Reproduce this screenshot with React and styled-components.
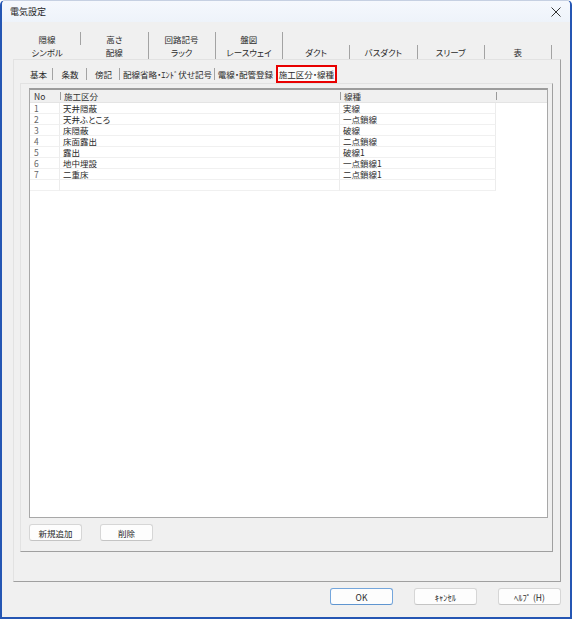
import React from "react";
import styled, { createGlobalStyle } from "styled-components";

const Global = createGlobalStyle`
  html, body { margin: 0; padding: 0; background: #ffffff; }
  body {
    font-family: "Noto Sans CJK JP", "Noto Sans", sans-serif;
    font-feature-settings: "palt";
    -webkit-font-smoothing: antialiased;
  }
  #root { width: 573px; height: 620px; }
  *, *::before, *::after { box-sizing: border-box; }
`;

const Window = styled.div`
  width: 572px;
  height: 619px;
  display: flex;
  flex-direction: column;
  background: #f0f0f0;
  border: 2px solid #2556b3;
  border-top: 1px solid #c6d0e2;
  border-radius: 5px 5px 0 0;
  overflow: hidden;
`;

const TitleBar = styled.div`
  height: 21px;
  flex: none;
  display: flex;
  align-items: center;
  padding: 0 9px 0 8px;
  background: linear-gradient(#f5f8fd, #eef3fa);
  font-size: 9px;
  color: #1e1e1e;
`;

const Close = styled.span`
  margin-left: auto;
  display: flex;
  align-items: center;
`;

const Body = styled.div`
  flex: 1;
  display: flex;
  flex-direction: column;
  padding: 10px 9px 0 11px;
  min-height: 0;
`;

const TabStrip = styled.div`
  flex: none;
  display: grid;
  grid-template-columns: repeat(8, 67.25px);
  grid-template-rows: 13px 14px;
  padding-left: 1px;
`;

const Tab = styled.div`
  display: flex;
  align-items: center;
  justify-content: center;
  font-size: 8.5px;
  color: #2a2a2a;
  border-right: 1px solid ${(p) => (p.$sep ? "#a3a3a3" : "transparent")};
  grid-row: ${(p) => p.$row};
`;

const Panel = styled.div`
  flex: 1;
  display: flex;
  flex-direction: column;
  min-height: 0;
  border: 1px solid #a0a0a0;
  border-top-color: #e2e2e2;
  border-left-color: #e2e2e2;
  padding: 5px 7px 29px 6px;
`;

const SubTabs = styled.div`
  flex: none;
  display: flex;
  height: 18px;
  padding-left: 4px;
`;

const SubTab = styled.div`
  position: relative;
  width: ${(p) => p.$w}px;
  display: flex;
  align-items: center;
  justify-content: center;
  font-size: 8.5px;
  color: #2a2a2a;
  white-space: nowrap;
  background: ${(p) => (p.$selected ? "#fbfbfb" : "transparent")};
  border: ${(p) => (p.$selected ? "2px solid #e80000" : "none")};
  &::after {
    content: "";
    display: ${(p) => (p.$sep ? "block" : "none")};
    position: absolute;
    right: 0;
    top: 3px;
    bottom: 3px;
    width: 1px;
    background: #a3a3a3;
  }
`;

const SubPanel = styled.div`
  flex: 1;
  display: flex;
  flex-direction: column;
  min-height: 0;
  border: 1px solid #a0a0a0;
  border-top-color: #e2e2e2;
  border-left-color: #e2e2e2;
  padding: 4px 4px 10px 8px;
`;

const Grid = styled.div`
  flex: 1;
  background: #ffffff;
  border: 1px solid #a8a8a8;
  border-top: 2px solid #9c9c9c;
  display: flex;
  flex-direction: column;
`;

const cols = "30px 280px 156px 1fr";

const HeaderRow = styled.div`
  display: grid;
  grid-template-columns: ${cols};
  height: 13px;
  background: #f0f0f0;
  border-bottom: 1px solid #e4e4e4;
`;

const HeaderCell = styled.div`
  position: relative;
  display: flex;
  align-items: center;
  padding-left: 4px;
  font-size: 8.5px;
  color: #333;
  &::before {
    content: "";
    display: ${(p) => (p.$sep ? "block" : "none")};
    position: absolute;
    left: 0;
    top: 2px;
    bottom: 2px;
    width: 1px;
    background: #9a9a9a;
  }
`;

const Row = styled.div`
  display: grid;
  grid-template-columns: ${cols};
  height: 11px;
`;

const Cell = styled.div`
  display: flex;
  align-items: center;
  padding-left: ${(p) => (p.$num ? 4 : 3)}px;
  font-size: 8.5px;
  color: ${(p) => (p.$num ? "#666" : "#2a2a2a")};
  border-bottom: 1px solid ${(p) => (p.$blank ? "transparent" : "#f0f0f0")};
  border-right: 1px solid ${(p) => (p.$blank ? "transparent" : "#ececec")};
  white-space: nowrap;
  overflow: hidden;
`;

const ButtonRow = styled.div`
  flex: none;
  display: flex;
  gap: 18px;
  margin-top: 6px;
`;

const Button = styled.button`
  width: ${(p) => p.$w}px;
  height: 17px;
  padding: 0;
  font-family: inherit;
  font-feature-settings: "palt";
  font-size: 8.5px;
  color: #2a2a2a;
  background: #fdfdfd;
  border: 1px solid ${(p) => (p.$default ? "#74a6dc" : "#d6d6d6")};
  border-bottom-color: ${(p) => (p.$default ? "#5f95d0" : "#c4c4c4")};
  border-radius: 3px;
`;

const Footer = styled.div`
  flex: none;
  height: 35px;
  display: flex;
  justify-content: flex-end;
  align-items: flex-start;
  gap: 21px;
  padding: 6px 0 0 0;
`;

const topTabs1 = ["隠線", "高さ", "回路記号", "盤図"];
const topTabs2 = ["シンボル", "配線", "ラック", "レースウェイ", "ダクト", "バスダクト", "スリーブ", "表"];

const subTabs = [
  { label: "基本", w: 29, sep: true },
  { label: "条数", w: 34, sep: true },
  { label: "傍記", w: 33, sep: true },
  { label: "配線省略・ｴﾝﾄﾞ伏せ記号", w: 95, sep: true },
  { label: "電線・配管登録", w: 61, sep: false },
  { label: "施工区分・線種", w: 61, selected: true },
];

const rows = [
  ["1", "天井隠蔽", "実線"],
  ["2", "天井ふところ", "一点鎖線"],
  ["3", "床隠蔽", "破線"],
  ["4", "床面露出", "二点鎖線"],
  ["5", "露出", "破線1"],
  ["6", "地中埋設", "一点鎖線1"],
  ["7", "二重床", "二点鎖線1"],
  ["", "", ""],
];

export default function App() {
  return (
    <>
      <Global />
      <Window>
        <TitleBar>
          電気設定
          <Close>
            <svg width="10" height="10" viewBox="0 0 10 10">
              <path d="M0.5 0.5L9.5 9.5M9.5 0.5L0.5 9.5" stroke="#333" strokeWidth="1" />
            </svg>
          </Close>
        </TitleBar>
        <Body>
          <TabStrip>
            {topTabs1.map((t) => (
              <Tab key={t} $row={1} $sep>
                {t}
              </Tab>
            ))}
            {topTabs2.map((t, i) => (
              <Tab key={t} $row={2} $sep={i !== 0}>
                {t}
              </Tab>
            ))}
          </TabStrip>
          <Panel>
            <SubTabs>
              {subTabs.map((t) => (
                <SubTab key={t.label} $w={t.w} $sep={t.sep} $selected={t.selected}>
                  {t.label}
                </SubTab>
              ))}
            </SubTabs>
            <SubPanel>
              <Grid>
                <HeaderRow>
                  <HeaderCell>No</HeaderCell>
                  <HeaderCell $sep>施工区分</HeaderCell>
                  <HeaderCell $sep>線種</HeaderCell>
                  <HeaderCell $sep />
                </HeaderRow>
                {rows.map((r, i) => (
                  <Row key={i}>
                    <Cell $num>{r[0]}</Cell>
                    <Cell>{r[1]}</Cell>
                    <Cell>{r[2]}</Cell>
                    <Cell $blank />
                  </Row>
                ))}
              </Grid>
              <ButtonRow>
                <Button $w={53}>新規追加</Button>
                <Button $w={53}>削除</Button>
              </ButtonRow>
            </SubPanel>
          </Panel>
          <Footer>
            <Button $w={63} $default>
              OK
            </Button>
            <Button $w={63}>ｷｬﾝｾﾙ</Button>
            <Button $w={63}>ﾍﾙﾌﾟ (H)</Button>
          </Footer>
        </Body>
      </Window>
    </>
  );
}
